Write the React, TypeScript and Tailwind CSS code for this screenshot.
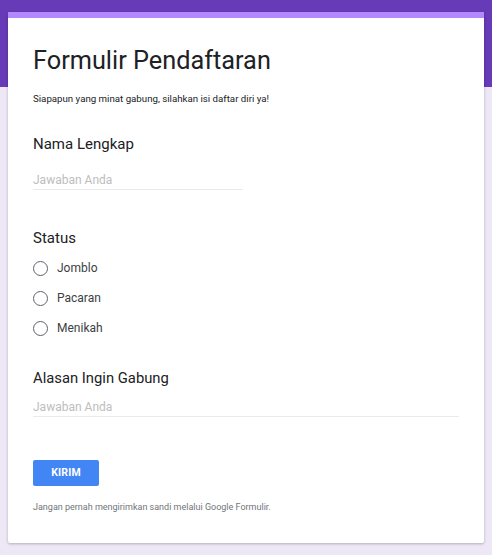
import React from "react";

function Radio({ label }: { label: string }) {
  return (
    <div className="flex items-center h-[30px]">
      <span className="w-[15px] h-[15px] rounded-full border-[1.5px] border-[#5f6368] box-border" />
      <span className="ml-[9px] text-[12px] text-[#3c4043]">{label}</span>
    </div>
  );
}

export default function App() {
  return (
    <div
      className="relative w-[492px] h-[555px] bg-[#ede7f6] overflow-hidden"
      style={{ fontFamily: "Roboto, 'Noto Sans', sans-serif" }}
    >
      <div className="absolute left-0 top-0 w-full h-[87px] bg-[#673ab7]" />
      <div className="relative pt-[12px] px-[8px]">
        <div className="bg-white rounded-[2px] shadow-[0_1px_3px_rgba(0,0,0,0.25)] overflow-hidden h-[531px]">
          <div className="h-[6px] bg-[#b388ff]" />
          <div className="px-[25px]">
            <h1 className="pt-[25px] text-[25.3px] leading-[36px] text-[#202124] font-normal">
              Formulir Pendaftaran
            </h1>
            <p className="mt-[12px] text-[9.7px] leading-[16px] text-[#202124]">
              Siapapun yang minat gabung, silahkan isi daftar diri ya!
            </p>
            <div className="mt-[25px] text-[15px] leading-[24px] text-[#202124]">Nama Lengkap</div>
            <div className="mt-[15px] w-[210px] border-b border-[#e8eaed] text-[12px] leading-[18px] text-[#bdbdbd]">
              Jawaban Anda
            </div>
            <div className="mt-[36px] text-[15px] leading-[24px] text-[#202124]">Status</div>
            <div className="mt-[3px] flex flex-col">
              <Radio label="Jomblo" />
              <Radio label="Pacaran" />
              <Radio label="Menikah" />
            </div>
            <div className="mt-[23px] text-[14.8px] leading-[24px] text-[#202124]">Alasan Ingin Gabung</div>
            <div className="mt-[8px] w-[426px] border-b border-[#e8eaed] text-[12px] leading-[18px] text-[#bdbdbd]">
              Jawaban Anda
            </div>
            <button className="block mt-[43px] w-[66px] h-[26px] rounded-[2px] bg-[#4285f4] text-white text-[10.5px] font-bold tracking-[0.2px]">
              KIRIM
            </button>
            <p className="mt-[15px] text-[9px] leading-[12px] text-[#70757a]">
              Jangan pernah mengirimkan sandi melalui Google Formulir.
            </p>
          </div>
        </div>
      </div>
    </div>
  );
}
